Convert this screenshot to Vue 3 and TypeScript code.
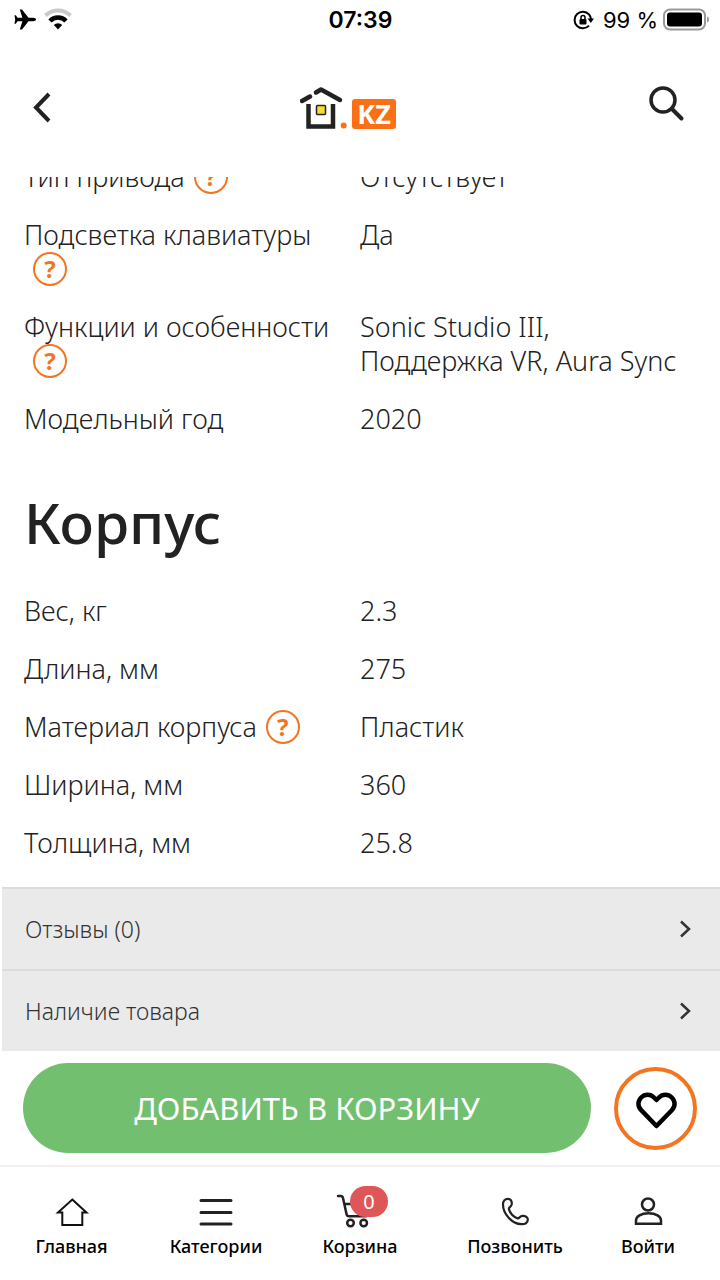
<script setup lang="ts">
interface Spec {
  label: string
  value: string
  help?: boolean
}

const features: Spec[] = [
  { label: 'Тип привода', value: 'Отсутствует', help: true },
  { label: 'Подсветка клавиатуры', value: 'Да', help: true },
  { label: 'Функции и особенности', value: 'Sonic Studio III, Поддержка VR, Aura Sync', help: true },
  { label: 'Модельный год', value: '2020' },
]

const body: Spec[] = [
  { label: 'Вес, кг', value: '2.3' },
  { label: 'Длина, мм', value: '275' },
  { label: 'Материал корпуса', value: 'Пластик', help: true },
  { label: 'Ширина, мм', value: '360' },
  { label: 'Толщина, мм', value: '25.8' },
]

const groups = [
  { title: '', rows: features },
  { title: 'Корпус', rows: body },
]

const sections = ['Отзывы (0)', 'Наличие товара']
const cartCount = 0
</script>

<template>
  <div class="app">
    <div class="status">
      <div class="status-side">
        <svg width="24" height="24" viewBox="0 0 24 24" aria-hidden="true">
          <path d="M24 11.500c0 1-1.200 1.700-3 1.700h-4.500L10 21.500H7.800l2.600-8.300H5.500L3.800 15.800H2.500L3.200 11.500 2.500 7.200h1.300l1.700 2.600h4.900L7.800 1.500H10l6.500 8.300H21c1.800 0 3 .7 3 1.700z" />
        </svg>
        <svg width="28" height="24" viewBox="0 0 28 24" aria-hidden="true">
          <path d="M1.500 7.500A18 18 0 0 1 26.500 7.500" fill="none" stroke="#c9c9c9" stroke-width="4" />
          <path d="M6 13A11 11 0 0 1 22 13" fill="none" stroke="#000" stroke-width="4.500" />
          <path d="M9.800 17A6 6 0 0 1 18.200 17L14 21.500z" />
        </svg>
      </div>
      <time class="clock">07:39</time>
      <div class="status-side end">
        <svg width="22" height="24" viewBox="0 0 22 24" aria-hidden="true">
          <path d="M17 6.400A8.300 8.300 0 1 0 17 17.600M17 6.400A8.300 8.300 0 0 1 19 11" fill="none" stroke="#000" stroke-width="2" />
          <path d="M15.500 10.500H22L18.800 15z" />
          <rect x="7.500" y="11" width="7" height="5.500" rx="1" />
          <path d="M9 11V9.500a2 2 0 0 1 4 0V11" fill="none" stroke="#000" stroke-width="1.500" />
        </svg>
        <span class="percent">99 %</span>
        <svg width="46" height="24" viewBox="0 0 46 24" aria-hidden="true">
          <rect x="1" y="1.500" width="41" height="20" rx="6" fill="none" stroke="#999" stroke-width="2" />
          <rect x="4" y="4.500" width="35" height="14" rx="3" />
          <path d="M44 8.500v6c1.500-.5 2-1.500 2-3s-.5-2.500-2-3z" fill="#999" />
        </svg>
      </div>
    </div>

    <header class="header">
      <button class="icon-btn" type="button" aria-label="Назад">
        <svg width="48" height="48" viewBox="0 0 48 48" aria-hidden="true">
          <path d="M25 10L12 23.500 25 37" fill="none" stroke="#222" stroke-width="4" />
        </svg>
      </button>
      <a class="logo" href="#" aria-label="Дом.KZ">
        <svg width="120" height="48" viewBox="0 0 120 48" aria-hidden="true">
          <g fill="none" stroke="#222" stroke-width="4.500">
            <path d="M2 17L10 12.500" stroke-linecap="round" />
            <path d="M16 8.500L21 5.500 40 16" stroke-linejoin="round" stroke-linecap="round" />
            <path d="M8.500 20V42.500H33V20" />
          </g>
          <rect x="16.500" y="21.500" width="9" height="9" rx="1" fill="#f8dc30" stroke="#222" stroke-width="1.500" />
          <circle cx="43.700" cy="41.500" r="3" fill="#fb6f16" />
          <rect x="52" y="15" width="44" height="30" rx="3" fill="#fb6f16" />
          <text x="74" y="40" text-anchor="middle" fill="#fff" class="logo-text">KZ</text>
        </svg>
      </a>
      <button class="icon-btn" type="button" aria-label="Поиск">
        <svg width="48" height="48" viewBox="0 0 48 48" aria-hidden="true">
          <circle cx="15" cy="16" r="12" fill="none" stroke="#222" stroke-width="3.500" />
          <path d="M24 25L33.500 34.500" stroke="#222" stroke-width="4" stroke-linecap="round" />
        </svg>
      </button>
    </header>

    <main class="content">
      <section v-for="(group, i) in groups" :key="i" class="group">
        <h2 v-if="group.title">{{ group.title }}</h2>
        <dl>
          <div v-for="row in group.rows" :key="row.label" class="row">
            <dt>{{ row.label }}<button v-if="row.help" class="help" type="button" :aria-label="'Подсказка: ' + row.label">?</button></dt>
            <dd>{{ row.value }}</dd>
          </div>
        </dl>
      </section>
      <div class="sections">
        <button v-for="name in sections" :key="name" class="section" type="button">
          <span>{{ name }}</span>
          <svg width="12" height="20" viewBox="0 0 12 20" aria-hidden="true">
            <path d="M2 2.500L10 10 2 17.500" fill="none" stroke="#333" stroke-width="2.500" />
          </svg>
        </button>
      </div>
    </main>

    <div class="actions">
      <button class="add" type="button">ДОБАВИТЬ В КОРЗИНУ</button>
      <button class="fav" type="button" aria-label="В избранное">
        <svg width="44" height="44" viewBox="0 0 44 44" aria-hidden="true">
          <path d="M22.500 14L20 11.500C16.500 7.800 10.800 7.800 7.200 11.500 3.500 15.200 3.500 20.500 7.200 24.200L22.500 40 37.800 24.200C41.500 20.500 41.500 15.200 37.800 11.500 34.200 7.800 28.500 7.800 25 11.500z" fill="none" stroke="#000" stroke-width="4.500" stroke-linejoin="round" />
        </svg>
      </button>
    </div>

    <nav class="tabs">
      <a href="#" class="tab">
        <svg width="36" height="36" viewBox="0 0 36 36" aria-hidden="true">
          <path d="M18.300 5.500L32.500 18.500H28.300V31H8.300V18.500H4z" fill="none" stroke="#111" stroke-width="2" />
        </svg>
        <span>Главная</span>
      </a>
      <a href="#" class="tab">
        <svg width="36" height="36" viewBox="0 0 36 36" aria-hidden="true">
          <path d="M3 6.500H33M3 18.500H33M3 30H33" stroke="#222" stroke-width="3" stroke-linecap="round" />
        </svg>
        <span>Категории</span>
      </a>
      <a href="#" class="tab">
        <span class="cart">
          <svg width="48" height="36" viewBox="0 0 48 36" aria-hidden="true">
            <g fill="none" stroke="#222" stroke-width="2.500">
              <path d="M2 2H4.500C6 2 6.800 2.700 7 4L10.500 20C10.800 21.500 11.500 22.300 13 22.300H30M9 10H20" stroke-linecap="round" stroke-linejoin="round" />
              <circle cx="14.500" cy="29" r="3.300" />
              <circle cx="27.700" cy="29" r="3.300" />
            </g>
          </svg>
          <span class="badge">{{ cartCount }}</span>
        </span>
        <span>Корзина</span>
      </a>
      <a href="#" class="tab">
        <svg width="36" height="36" viewBox="0 0 36 36" aria-hidden="true">
          <path d="M6 10.500C6 7 8.200 4.800 10.800 4.800 13.500 4.800 15 7 14.800 10 14.600 12.500 12.200 13 11.800 14.800 12.800 18.800 16.500 22.800 20.800 24.500 22.500 24.300 23 22 25.500 21.800 28.500 21.600 31 23.300 30.800 25.800 30.500 28.500 28 30.300 24.500 30.200 15 29.800 6 20 6 10.500z" fill="none" stroke="#222" stroke-width="2.200" stroke-linejoin="round" />
        </svg>
        <span>Позвонить</span>
      </a>
      <a href="#" class="tab">
        <svg width="36" height="36" viewBox="0 0 36 36" aria-hidden="true">
          <g fill="none" stroke="#222" stroke-width="2.500">
            <circle cx="18" cy="10.500" r="6" />
            <path d="M6 29.800V26.500C6 22.500 11 19.300 18.500 19.300S31 22.500 31 26.500V29.800z" />
          </g>
        </svg>
        <span>Войти</span>
      </a>
    </nav>
  </div>
</template>

<style>
body {
  margin: 0;
  background: #fff;
}
</style>

<style scoped>
.app {
  display: flex;
  flex-direction: column;
  height: 100vh;
  font-family: "Noto Sans", "Open Sans", sans-serif;
  color: #222;
}
button {
  padding: 0;
  border: 0;
  background: none;
  font: inherit;
  color: inherit;
}
svg {
  display: block;
  flex: none;
}
.status {
  display: grid;
  flex: none;
  grid-template-columns: 1fr auto 1fr;
  align-items: center;
  height: 40px;
  padding: 0 11px 0 12px;
  font-family: Inter, sans-serif;
  color: #000;
}
.status-side {
  display: flex;
  align-items: center;
  gap: 8px;
}
.end {
  gap: 5px;
  justify-content: flex-end;
}
.clock {
  font-size: 23px;
  font-weight: 600;
}
.percent {
  margin-left: 4px;
  font-size: 22px;
}
.header {
  box-sizing: border-box;
  display: flex;
  flex: none;
  align-items: center;
  justify-content: space-between;
  height: 137px;
  padding: 0 24px 2px;
}
.logo-text {
  font: 700 27px "Noto Sans", sans-serif;
}
.content {
  display: flex;
  flex: 1;
  flex-direction: column;
  justify-content: flex-end;
  min-height: 0;
  overflow: hidden;
}
.group {
  padding: 0 24px;
}
h2 {
  margin: 54px 0 40px;
  font-size: 57px;
  font-weight: 500;
  line-height: 64px;
}
dl {
  display: grid;
  gap: 24px;
  margin: 0;
  font-size: 27px;
  font-weight: 300;
  line-height: 34px;
}
.row {
  display: grid;
  grid-template-columns: 1fr 1fr;
}
dt {
  padding-right: 8px;
}
dd {
  margin: 0;
}
.help {
  box-sizing: border-box;
  width: 34px;
  height: 34px;
  margin-left: 9px;
  border: 2px solid #f37521;
  border-radius: 50%;
  font-size: 24px;
  font-weight: 700;
  line-height: 30px;
  color: #f37521;
  vertical-align: top;
}
.sections {
  margin: 27px 0 0 2px;
  background: #eaeaea;
}
.section {
  box-sizing: border-box;
  display: flex;
  align-items: center;
  justify-content: space-between;
  width: 100%;
  height: 82px;
  padding: 0 29px 0 23px;
  border-top: 2px solid #dcdcdc;
  font-size: 23px;
  font-weight: 300;
  color: #333;
}
.actions {
  display: flex;
  flex: none;
  align-items: center;
  gap: 23px;
  padding: 12px 23px;
}
.add {
  flex: 1;
  height: 90px;
  border-radius: 45px;
  background: #73bf70;
  font-size: 31px;
  color: #fff;
}
.fav {
  display: flex;
  align-items: center;
  justify-content: center;
  box-sizing: border-box;
  width: 83px;
  height: 83px;
  border: 4px solid #f37521;
  border-radius: 50%;
}
.tabs {
  box-sizing: border-box;
  display: grid;
  flex: none;
  grid-template-columns: 143fr 146fr 142fr 168fr 98fr;
  height: 115px;
  padding: 27px 23px 0 0;
  border-top: 2px solid #f4f0f1;
}
.tab {
  display: flex;
  flex-direction: column;
  align-items: center;
  gap: 4px;
  font-size: 18px;
  font-weight: 500;
  line-height: 24px;
  color: #000;
  text-decoration: none;
}
.cart {
  position: relative;
}
.badge {
  position: absolute;
  top: -8px;
  left: 14px;
  width: 38px;
  border-radius: 16px;
  background: #df5658;
  font-size: 20px;
  font-weight: 400;
  line-height: 31px;
  color: #fff;
  text-align: center;
}
</style>
